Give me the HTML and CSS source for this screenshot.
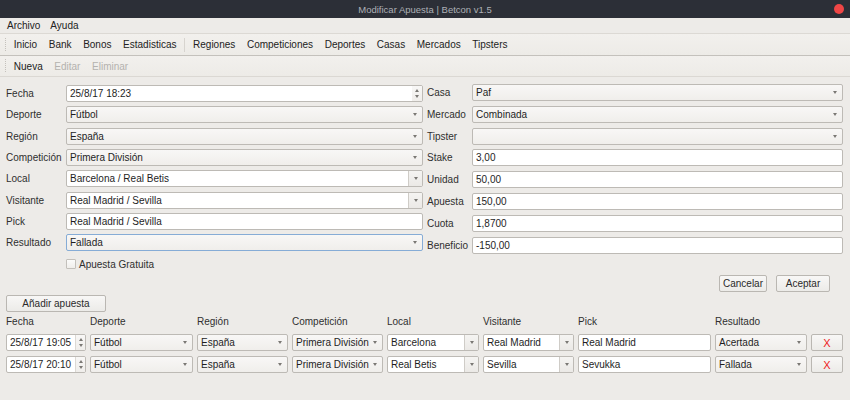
FILE: index.html
```html
<!DOCTYPE html>
<html lang="es">
<head>
<meta charset="utf-8">
<title>Modificar Apuesta | Betcon v1.5</title>
<link rel="stylesheet" href="styles.css">
</head>
<body>
<div class="window">
  <div class="titlebar">
    <span class="title">Modificar Apuesta | Betcon v1.5</span>
    <span class="close"></span>
  </div>
  <div class="menubar">
    <span class="menu-item">Archivo</span>
    <span class="menu-item">Ayuda</span>
  </div>
  <div class="toolbar tb1">
    <svg class="handle" width="6" height="14" viewBox="0 0 6 14"><defs><pattern id="dots1" width="3" height="2" patternUnits="userSpaceOnUse"><rect x="0" y="0" width="1" height="1" fill="#c4c1bc"/></pattern></defs><rect x="1" y="0" width="5" height="14" fill="url(#dots1)"/></svg>
    <span class="tb-item">Inicio</span>
    <span class="tb-item">Bank</span>
    <span class="tb-item">Bonos</span>
    <span class="tb-item">Estadisticas</span>
    <span class="tb-sep"></span>
    <span class="tb-item">Regiones</span>
    <span class="tb-item">Competiciones</span>
    <span class="tb-item">Deportes</span>
    <span class="tb-item">Casas</span>
    <span class="tb-item">Mercados</span>
    <span class="tb-item">Tipsters</span>
  </div>
  <div class="toolbar tb2">
    <svg class="handle" width="6" height="14" viewBox="0 0 6 14"><defs><pattern id="dots2" width="3" height="2" patternUnits="userSpaceOnUse"><rect x="0" y="0" width="1" height="1" fill="#c4c1bc"/></pattern></defs><rect x="1" y="0" width="5" height="14" fill="url(#dots2)"/></svg>
    <span class="tb-item">Nueva</span>
    <span class="tb-item disabled">Editar</span>
    <span class="tb-item disabled">Eliminar</span>
  </div>

  <div class="content">
    <div class="form">
      <div class="col col-left">
        <span class="lbl">Fecha</span>
        <div class="field spin"><span class="txt">25/8/17 18:23</span><span class="spinbtn"><i class="up"></i><i class="down"></i></span></div>
        <span class="lbl">Deporte</span>
        <div class="field combo"><span class="txt">Fútbol</span><i class="arrow"></i></div>
        <span class="lbl">Región</span>
        <div class="field combo"><span class="txt">España</span><i class="arrow"></i></div>
        <span class="lbl">Competición</span>
        <div class="field combo"><span class="txt">Primera División</span><i class="arrow"></i></div>
        <span class="lbl">Local</span>
        <div class="field ecombo"><span class="txt">Barcelona / Real Betis</span><span class="ebtn"><i class="arrow"></i></span></div>
        <span class="lbl">Visitante</span>
        <div class="field ecombo"><span class="txt">Real Madrid / Sevilla</span><span class="ebtn"><i class="arrow"></i></span></div>
        <span class="lbl">Pick</span>
        <div class="field text"><span class="txt">Real Madrid / Sevilla</span></div>
        <span class="lbl">Resultado</span>
        <div class="field combo focus"><span class="txt">Fallada</span><i class="arrow"></i></div>
        <span class="lbl"></span>
        <div class="check-row"><span class="checkbox"></span><span class="check-lbl">Apuesta Gratuita</span></div>
      </div>
      <div class="col col-right">
        <span class="lbl">Casa</span>
        <div class="field combo"><span class="txt">Paf</span><i class="arrow"></i></div>
        <span class="lbl">Mercado</span>
        <div class="field combo"><span class="txt">Combinada</span><i class="arrow"></i></div>
        <span class="lbl">Tipster</span>
        <div class="field combo"><span class="txt"></span><i class="arrow"></i></div>
        <span class="lbl">Stake</span>
        <div class="field text"><span class="txt">3,00</span></div>
        <span class="lbl">Unidad</span>
        <div class="field text"><span class="txt">50,00</span></div>
        <span class="lbl">Apuesta</span>
        <div class="field text"><span class="txt">150,00</span></div>
        <span class="lbl">Cuota</span>
        <div class="field text"><span class="txt">1,8700</span></div>
        <span class="lbl">Beneficio</span>
        <div class="field text"><span class="txt">-150,00</span></div>
      </div>
    </div>

    <div class="actions">
      <button class="btn btn-cancel">Cancelar</button>
      <button class="btn btn-ok">Aceptar</button>
    </div>

    <div class="add-row">
      <button class="btn btn-add">Añadir apuesta</button>
    </div>

    <div class="table">
      <span class="th">Fecha</span>
      <span class="th">Deporte</span>
      <span class="th">Región</span>
      <span class="th">Competición</span>
      <span class="th">Local</span>
      <span class="th">Visitante</span>
      <span class="th">Pick</span>
      <span class="th">Resultado</span>
      <span class="th"></span>

      <div class="field spin"><span class="txt">25/8/17 19:05</span><span class="spinbtn sm"><i class="up"></i><i class="down"></i></span></div>
      <div class="field combo"><span class="txt">Fútbol</span><i class="arrow"></i></div>
      <div class="field combo"><span class="txt">España</span><i class="arrow"></i></div>
      <div class="field combo"><span class="txt">Primera División</span><i class="arrow"></i></div>
      <div class="field ecombo"><span class="txt">Barcelona</span><span class="ebtn"><i class="arrow"></i></span></div>
      <div class="field ecombo"><span class="txt">Real Madrid</span><span class="ebtn"><i class="arrow"></i></span></div>
      <div class="field text"><span class="txt">Real Madrid</span></div>
      <div class="field combo"><span class="txt">Acertada</span><i class="arrow"></i></div>
      <button class="btn btn-x">X</button>

      <div class="field spin"><span class="txt">25/8/17 20:10</span><span class="spinbtn sm"><i class="up"></i><i class="down"></i></span></div>
      <div class="field combo"><span class="txt">Fútbol</span><i class="arrow"></i></div>
      <div class="field combo"><span class="txt">España</span><i class="arrow"></i></div>
      <div class="field combo"><span class="txt">Primera División</span><i class="arrow"></i></div>
      <div class="field ecombo"><span class="txt">Real Betis</span><span class="ebtn"><i class="arrow"></i></span></div>
      <div class="field ecombo"><span class="txt">Sevilla</span><span class="ebtn"><i class="arrow"></i></span></div>
      <div class="field text"><span class="txt">Sevukka</span></div>
      <div class="field combo"><span class="txt">Fallada</span><i class="arrow"></i></div>
      <button class="btn btn-x">X</button>
    </div>
  </div>
</div>
</body>
</html>
```

FILE: styles.css
```css
* { box-sizing: border-box; }
html, body {
  margin: 0;
  padding: 0;
  width: 850px;
  height: 400px;
  overflow: hidden;
  background: #edebe8;
  font-family: "Liberation Sans", Arial, sans-serif;
  font-size: 10px;
  color: #2f2f2f;
}
.window { width: 850px; height: 400px; display: flex; flex-direction: column; }

/* title bar */
.titlebar {
  height: 18px;
  background: #2c2f37;
  display: flex;
  align-items: center;
  justify-content: center;
  position: relative;
}
.title { color: #adb0b6; font-size: 9.5px; }
.close {
  position: absolute;
  right: 6px;
  top: 4px;
  width: 10px;
  height: 10px;
  border-radius: 50%;
  background: #ef4646;
}

/* menu */
.menubar {
  height: 16px;
  display: flex;
  align-items: center;
  padding-left: 2px;
  border-bottom: 1px solid #dcd9d4;
  background: #edebe8;
}
.menu-item { padding: 0 5px; color: #222; }

/* toolbars */
.toolbar {
  display: flex;
  align-items: center;
  padding-left: 2px;
  background: linear-gradient(#f2f0ed, #edebe7);
}
.tb1 { height: 22px; border-bottom: 1px solid #c4c1bc; }
.tb2 { height: 21px; border-bottom: 1px solid #dbd8d3; }
.handle { display: block; flex: none; }
.tb-item { padding: 0 5.8px; color: #222; }
.tb-item.disabled { color: #b4b2ae; }
.tb-sep {
  width: 1px;
  height: 14px;
  background: #d7d4cf;
  margin: 0 2px;
}

/* content */
.content { padding: 8px 7px 0 6px; display: flex; flex-direction: column; }
.form {
  display: grid;
  grid-template-columns: 417px 416px;
  column-gap: 4px;
  align-items: start;
}
.col { display: grid; align-items: center; }
.col-left { grid-template-columns: 60px 1fr; grid-auto-rows: 17px; row-gap: 4.33px; }
.col-right { grid-template-columns: 45px 1fr; grid-auto-rows: 17px; row-gap: 4.8px; margin-top: -1px; }
.lbl { color: #2f2f2f; white-space: nowrap; }

.field {
  height: 17px;
  border: 1px solid #bdbab5;
  border-radius: 2px;
  display: flex;
  align-items: center;
  overflow: hidden;
  color: #1e1e1e;
}
.field .txt {
  flex: 1;
  padding-left: 3px;
  white-space: nowrap;
  overflow: hidden;
}
.text, .spin, .ecombo { background: #fff; }
.combo {
  background: linear-gradient(#f8f7f6, #f0eeeb);
  padding-right: 5px;
}
.combo.focus { border-color: #86acd6; }
.arrow {
  display: block;
  width: 0;
  height: 0;
  border-left: 2.5px solid transparent;
  border-right: 2.5px solid transparent;
  border-top: 3px solid #7a7874;
}
.ebtn {
  width: 14px;
  height: 100%;
  border-left: 1px solid #cfccc7;
  background: linear-gradient(#f5f4f2, #ebe9e6);
  display: flex;
  align-items: center;
  justify-content: center;
}
.spinbtn {
  width: 10px;
  height: 100%;
  display: flex;
  flex-direction: column;
  align-items: center;
  justify-content: center;
  gap: 3px;
  background: linear-gradient(#f8f7f6, #f0eeeb);
}
.spinbtn.sm { width: 10px; border-left: 1px solid #dcd9d4; }
.spinbtn .up {
  display: block; width: 0; height: 0;
  border-left: 2.5px solid transparent;
  border-right: 2.5px solid transparent;
  border-bottom: 3px solid #7a7874;
}
.spinbtn .down {
  display: block; width: 0; height: 0;
  border-left: 2.5px solid transparent;
  border-right: 2.5px solid transparent;
  border-top: 3px solid #7a7874;
}

.check-row { display: flex; align-items: center; height: 13px; }
.checkbox {
  width: 10px;
  height: 10px;
  border: 1px solid #c3c0bb;
  border-radius: 1px;
  background: linear-gradient(#fbfbfa, #f0eeeb);
  margin-right: 3px;
}
.check-lbl { color: #2f2f2f; }

/* buttons */
.btn {
  font-family: "Liberation Sans", Arial, sans-serif;
  font-size: 10px;
  color: #2a2a2a;
  height: 17px;
  padding: 0;
  border: 1px solid #bab7b2;
  border-radius: 2px;
  background: linear-gradient(#f8f7f6, #ecebe8);
  display: flex;
  align-items: center;
  justify-content: center;
}
.actions {
  display: flex;
  justify-content: flex-end;
  gap: 9px;
  margin-top: 2px;
  padding-right: 13px;
}
.btn-cancel { width: 48px; }
.btn-ok { width: 54px; }
.add-row { display: flex; margin-top: 3px; }
.btn-add { width: 100px; }

/* table */
.table {
  display: grid;
  grid-template-columns: 80px 103px 91px 91px 92px 91px 133px 92px 32px;
  column-gap: 4px;
  grid-template-rows: 17px 17px 17px;
  row-gap: 4.7px;
  margin-top: 1px;
  align-items: center;
}
.th { color: #2f2f2f; white-space: nowrap; }
.btn-x {
  width: 32px;
  color: #ee1c1c;
  font-size: 11px;
  font-weight: normal;
}
```
